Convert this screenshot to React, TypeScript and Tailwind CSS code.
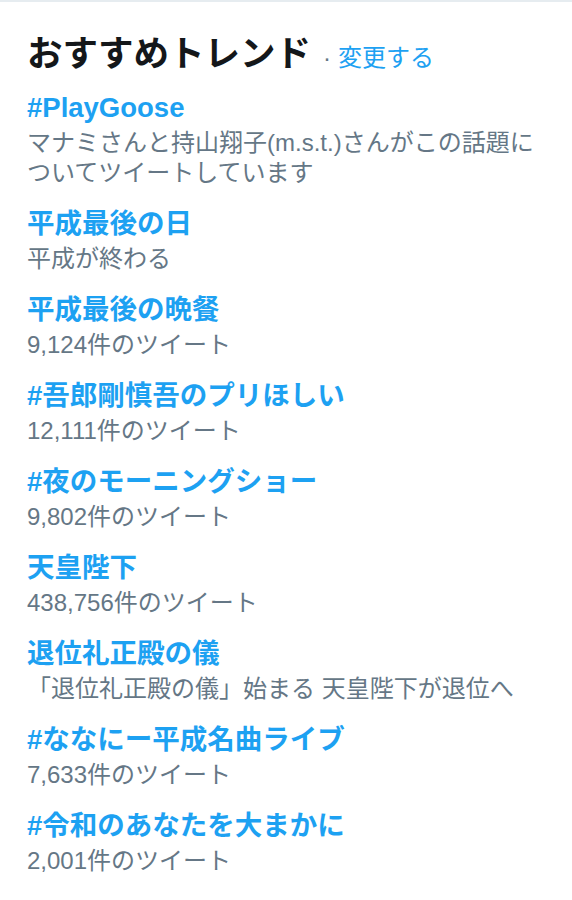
import React from "react";

type Trend = {
  name: string;
  sub: string;
};

const trends: Trend[] = [
  {
    name: "#PlayGoose",
    sub: "マナミさんと持山翔子(m.s.t.)さんがこの話題についてツイートしています",
  },
  { name: "平成最後の日", sub: "平成が終わる" },
  { name: "平成最後の晩餐", sub: "9,124件のツイート" },
  { name: "#吾郎剛慎吾のプリほしい", sub: "12,111件のツイート" },
  { name: "#夜のモーニングショー", sub: "9,802件のツイート" },
  { name: "天皇陛下", sub: "438,756件のツイート" },
  { name: "退位礼正殿の儀", sub: "「退位礼正殿の儀」始まる 天皇陛下が退位へ" },
  { name: "#ななにー平成名曲ライブ", sub: "7,633件のツイート" },
  { name: "#令和のあなたを大まかに", sub: "2,001件のツイート" },
];

const App: React.FC = () => {
  return (
    <div
      className="min-h-screen bg-white border-t-2 border-[#e6ecf0]"
      style={{ fontFamily: '"Liberation Sans", "Noto Sans CJK JP", sans-serif' }}
    >
      <div className="pl-[27px] pr-[27px] pt-[30px]">
        {/* Header */}
        <div className="flex items-baseline h-[44px]">
          <h2 className="text-[35.5px] leading-[44px] font-bold text-[#14171a]">
            おすすめトレンド
          </h2>
          <span className="text-[24px] text-[#657786] ml-[12px] mr-[7px]">·</span>
          <a className="text-[24px] text-[#1da1f2]">変更する</a>
        </div>

        {/* Trend list */}
        <ul className="mt-[16px] flex flex-col gap-[20px]">
          {trends.map((t) => (
            <li key={t.name}>
              <div className="text-[27.5px] leading-[32px] font-bold text-[#1da1f2]">
                {t.name}
              </div>
              <div className="mt-[4px] text-[24px] leading-[30px] text-[#657786]">
                {t.sub}
              </div>
            </li>
          ))}
        </ul>
      </div>
    </div>
  );
};

export default App;
